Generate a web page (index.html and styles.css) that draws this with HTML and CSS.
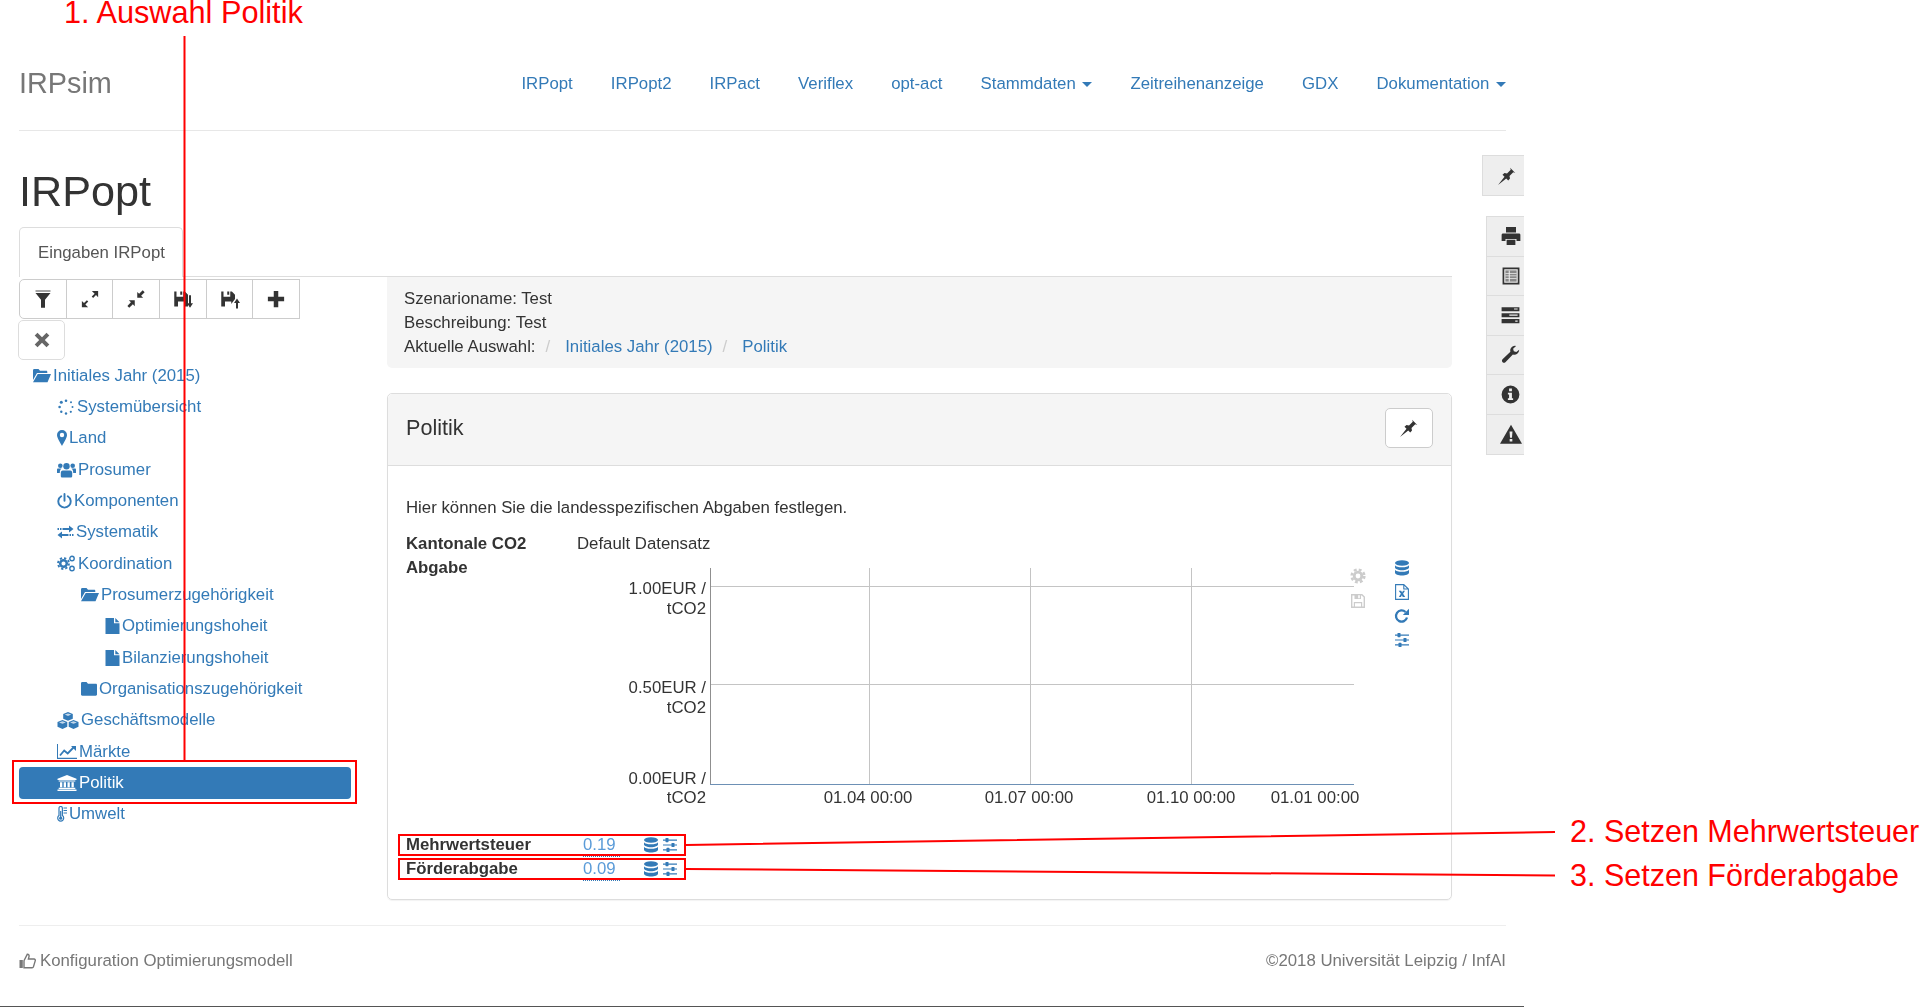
FILE: index.html
```html
<!DOCTYPE html>
<html lang="de">
<head>
  <meta charset="UTF-8" />
  <title>IRPsim</title>
  <link rel="stylesheet" href="styles.css">
</head>
<body>
  <svg class="sprite" xmlns="http://www.w3.org/2000/svg">
    <symbol id="i-pin" viewBox="0 0 16 16"><path d="M.8 15.200 6 8.600 4.400 7 6 5.600l2 .4 3-3-.5-1.600 4.100 4.100-1.600-.5-3 3 .4 2-1.400 1.600-1.600-1.600z"/></symbol>
    <symbol id="i-filter" viewBox="0 0 16 16"><path fill-opacity=".6" d="M2 1h12v1.200H2z"/><path d="M2 3.200h12L9.600 8.500v6.500H6.400V8.500z"/></symbol>
    <symbol id="i-full" viewBox="0 0 16 16"><path d="M9.500 1.500h5v5l-1.700-1.700-2.300 2.300-1.100-1.100 2.300-2.300zM6.500 14.500h-5v-5l1.700 1.700 2.300-2.300 1.100 1.100-2.300 2.300z"/></symbol>
    <symbol id="i-small" viewBox="0 0 16 16"><path d="M9 7V2.300l1.500 1.500 2.900-2.800 1.500 1.500-2.800 2.900L13.700 7zM7 9v4.700l-1.500-1.500-2.900 2.800-1.500-1.500 2.800-2.900L2.300 9z"/></symbol>
    <symbol id="i-savedown" viewBox="0 0 16 16"><path d="M1 2h1.800v4.200h5.400V2h1.300L12 4.500V14H9V10H4v4H1zM5.800 2h1.600v2.600H5.800z"/><path d="M12.800 5h1.600v6.300H16L13.600 15 11.200 11.300h1.600z"/></symbol>
    <symbol id="i-saveup" viewBox="0 0 16 16"><path d="M1 2h1.800v4.200h5.400V2h1.300L12 4.500V8L9 12V10H4v4H1zM5.800 2h1.600v2.600H5.800z"/><path d="M13.600 7.500 16 11.200h-1.600V15.500h-1.600v-4.300h-1.600z"/></symbol>
    <symbol id="i-plus" viewBox="0 0 16 16"><path d="M6.200 1.500h3.600v4.700h4.700v3.600H9.800v4.700H6.200V9.800H1.500V6.200h4.700z"/></symbol>
    <symbol id="i-x" viewBox="0 0 16 16"><path d="M4 1.500 8 5.500l4-4L14.500 4l-4 4 4 4-2.500 2.500-4-4-4 4L1.500 12l4-4-4-4z"/></symbol>
    <symbol id="i-open" viewBox="0 0 18 14"><path d="M0 1.500C0 .7.500 0 1.200 0h4.300L7 1.700h6.300c.6 0 1 .5 1 1V4H4L0 11zM4.700 5H18l-3.500 8.200H0z"/></symbol>
    <symbol id="i-folder" viewBox="0 0 16 14"><path d="M0 1.500C0 .7.500 0 1.200 0h4.300L7 1.700h7.800c.7 0 1.200.5 1.200 1.200v9.600c0 .7-.5 1.200-1.200 1.200H1.200C.5 13.700 0 13.200 0 12.500z"/></symbol>
    <symbol id="i-file" viewBox="0 0 14 16"><path d="M0 0h8.500v5.200H14V16H0zM9.800 0 14 4.200H9.800z"/></symbol>
    <symbol id="i-spin" viewBox="0 0 16 16"><g><circle cx="8" cy="1.800" r="1.300"/><circle cx="13" cy="3.300" r="1"/><circle cx="14.500" cy="8" r="1"/><circle cx="12.800" cy="12.800" r="1.100"/><circle cx="8" cy="14.500" r="1.200"/><circle cx="3.300" cy="12.800" r="1.200"/><circle cx="1.600" cy="8" r="1.300"/><circle cx="3.300" cy="3.300" r="1.500"/></g></symbol>
    <symbol id="i-marker" viewBox="0 0 10 16"><path fill-rule="evenodd" d="M5 0a5 5 0 0 1 5 5c0 3-3.500 8-5 11C3.500 13 0 8 0 5a5 5 0 0 1 5-5zm0 2.800a2.200 2.200 0 1 0 0 4.400 2.200 2.200 0 0 0 0-4.400z"/></symbol>
    <symbol id="i-users" viewBox="0 0 19 16"><circle cx="9.500" cy="4.200" r="3.200"/><circle cx="3.300" cy="3.700" r="2.300"/><circle cx="15.700" cy="3.700" r="2.300"/><path d="M5.800 8.500h7.400c1.300 0 2 1 2 2.200V14c0 1-.7 1.600-1.600 1.600H5.400c-.9 0-1.600-.6-1.600-1.600v-3.300c0-1.200.7-2.200 2-2.200zM.8 6.600h3.800c-1.300 1-1.800 2.100-1.800 4.400H0V8c0-.8.300-1.400.8-1.400zM14.400 6.600h3.800c.5 0 .8.600.8 1.400v3h-2.800c0-2.300-.5-3.400-1.800-4.400z"/></symbol>
    <symbol id="i-power" viewBox="0 0 15 16"><path fill="none" stroke="currentColor" stroke-width="1.900" stroke-linecap="round" d="M4.200 3.200a6.200 6.200 0 1 0 6.600 0M7.500 1v6.800"/></symbol>
    <symbol id="i-exch" viewBox="0 0 16 14"><path d="M0 3h1.500v2H0zM2.500 3h1.500v2H2.500zM5 3h6.500V.5L16 4l-4.500 3.500V5H5zM16 9h-1.500v2H16zM13.500 9H12v2h1.500zM11 9H4.500V6.500L0 10l4.500 3.500V11H11z"/></symbol>
    <symbol id="i-cogs" viewBox="0 0 19 17">
      <g fill="none" stroke="currentColor"><circle cx="6.500" cy="8.500" r="3.300" stroke-width="2.500"/><circle cx="6.500" cy="8.500" r="5.500" stroke-width="1.800" stroke-dasharray="2.300 2"/><circle cx="15" cy="3.500" r="2.200" stroke-width="1.400"/><circle cx="15" cy="13.500" r="2.200" stroke-width="1.400"/></g>
    </symbol>
    <symbol id="i-cubes" viewBox="0 0 21 17"><path d="M10.500 0l4.800 2v4.700l-4.800 2-4.800-2V2zM5 8l4.800 2v4.800L5 17 0 14.800V10zM16 8l5 2v4.800L16 17l-4.800-2.200V10z"/><path fill="#fff" fill-opacity=".7" d="M7.200 2.600l3.300 1.300 3.300-1.300-3.300-1.200zM1.500 10.500 5 11.800l3.300-1.300L5 9.200zM12.600 10.500 16 11.800l3.400-1.300L16 9.200z"/></symbol>
    <symbol id="i-chart" viewBox="0 0 20 15"><path d="M0 0h1v13.800h19V15H0z"/><path fill="none" stroke="currentColor" stroke-width="1.800" d="M3 11.500l4.200-5 3.500 3L16.500 3.500"/><path d="M14 2h5v5z"/></symbol>
    <symbol id="i-bank" viewBox="0 0 19 16"><path d="M9.500 0 19 3.700v1.300H0V3.700zM1.200 5.600h16.600v1H1.200zM2.500 7.200h2.300v5H2.500zM6.200 7.200h2.300v5H6.200zM10 7.200h2.300v5H10zM14 7.200h2.300v5H14zM1.200 12.800h16.600v1.300H1.200zM0 14.600h19V16H0z"/></symbol>
    <symbol id="i-thermo" viewBox="0 0 10 16"><path fill="none" stroke="currentColor" stroke-width="1.200" d="M2 9.600V2.200a1.700 1.700 0 0 1 3.400 0v7.400a3 3 0 1 1-3.400 0z"/><circle cx="3.700" cy="12.200" r="1.600"/><path d="M3.100 5h1.200v6H3.100zM6.500 1.500H10v1H6.500zM6.500 4H10v1H6.500zM6.500 6.500H10v1H6.500z"/></symbol>
    <symbol id="i-db" viewBox="0 0 16 16"><ellipse cx="8" cy="3" rx="7" ry="2.800"/><path d="M1 5.200c.8 1.300 3.600 2.100 7 2.100s6.200-.8 7-2.100v2.300c0 1.400-3.100 2.700-7 2.700S1 8.900 1 7.500zM1 9.700c.8 1.300 3.600 2.100 7 2.100s6.200-.8 7-2.100V12.800c0 1.500-3.100 2.700-7 2.700s-7-1.200-7-2.700z"/></symbol>
    <symbol id="i-sliders" viewBox="0 0 16 16"><path d="M1 2.500h14v1.200H1zM1 7.400h14v1.200H1zM1 12.300h14v1.200H1z"/><rect x="3.500" y="1" width="3" height="4.200" rx=".6"/><rect x="9.500" y="5.900" width="3" height="4.200" rx=".6"/><rect x="4.500" y="10.800" width="3" height="4.200" rx=".6"/></symbol>
    <symbol id="i-excel" viewBox="0 0 14 16"><path fill="none" stroke="currentColor" stroke-width="1.100" d="M.6.600h8.200L13.400 5v10.400H.6zM8.800.6V5h4.600"/><path d="M3.700 6.800h2.500l.9 1.700.9-1.700h2l-1.900 2.900 2.100 3.300H7.800L6.900 11.200 5.900 13H3.800L5.900 9.700z"/></symbol>
    <symbol id="i-refresh" viewBox="0 0 16 16"><path fill="none" stroke="currentColor" stroke-width="2.300" d="M13 9.500A5.600 5.600 0 1 1 11.500 4"/><path d="M15 .8V7H8.800z"/></symbol>
    <symbol id="i-cog" viewBox="0 0 16 16"><g fill="none" stroke="currentColor"><circle cx="8" cy="8" r="3.800" stroke-width="2.800"/><circle cx="8" cy="8" r="6.300" stroke-width="2.600" stroke-dasharray="2.800 2.150"/></g></symbol>
    <symbol id="i-save" viewBox="0 0 16 16"><path fill="none" stroke="currentColor" stroke-width="1.400" d="M1.700 1.700h10.200l2.400 2.400v10.200H1.700z"/><path d="M4.500 1.500h6.500v4.500H4.500zM3.800 9h8.400v5.500H3.800z"/><path fill="#fff" d="M8.200 2.300h1.600v2.900H8.200zM5 10.200h6v3.400H5z"/></symbol>
    <symbol id="i-print" viewBox="0 0 16 16"><path d="M4 .8h8v4.400H4zM1.600 6h12.800c.6 0 1.100.5 1.100 1.100V12h-3.100v-1.700H3.600V12H.5V7.100C.5 6.500 1 6 1.600 6zM4.500 11h7v4.200h-7z"/></symbol>
    <symbol id="i-list" viewBox="0 0 16 16"><path fill-rule="evenodd" d="M.5.500h15v15H.5zM2 2v12h12V2z"/><path fill-opacity=".55" d="M3 3h10v10H3z"/><path fill="#eee" d="M6 3h.9v10H6zM3 5.300h10v.7H3zM3 7.600h10v.7H3zM3 9.900h10v.7H3z"/></symbol>
    <symbol id="i-tasks" viewBox="0 0 16 16"><path d="M.5 1h15v3.500H.5zM.5 6h15v3.500H.5zM.5 11h15v3.500H.5z"/><path fill="#eee" d="M11 2h3v1h-3zM7 7.200h7v1H7zM12 12.200h2v1h-2z"/></symbol>
    <symbol id="i-wrench" viewBox="0 0 16 16"><path d="M15.300 4a4 4 0 0 1-5.300 3.900L3.700 14.500a1.700 1.700 0 0 1-2.400-2.400L7.900 5.700A4 4 0 0 1 12.700.8L10.200 3.200l.6 2.100 2.100.6z"/></symbol>
    <symbol id="i-info" viewBox="0 0 16 16"><path fill-rule="evenodd" d="M8 .5a7.500 7.500 0 1 0 0 15A7.500 7.500 0 0 0 8 .5zM6.800 3h2.400v2.200H6.800zM5.800 6.500h3.400v4.700h1v1.500H5.800v-1.500h1V8h-1z"/></symbol>
    <symbol id="i-warn" viewBox="0 0 18 16"><path fill-rule="evenodd" d="M9 .5l9 15.500H0zM7.800 6h2.400l-.4 5H8.200zM7.900 12h2.200v2.200H7.900z"/></symbol>
    <symbol id="i-thumb" viewBox="0 0 17 16"><path d="M.5 7h3.300v8H.5z"/><path fill="none" stroke="currentColor" stroke-width="1.400" d="M5 7.700 8.300 1.200c1.500 0 2 1.200 1.700 2.400L9.400 6H15c1.100 0 1.500 1 1.200 1.900l-1.700 5.700c-.2.700-.7 1.100-1.400 1.100H5z"/></symbol>
  </svg>

  <div class="page">
    <nav class="topnav">
      <span class="brand">IRPsim</span>
      <ul class="navlinks">
        <li><a>IRPopt</a></li>
        <li><a>IRPopt2</a></li>
        <li><a>IRPact</a></li>
        <li><a>Veriflex</a></li>
        <li><a>opt-act</a></li>
        <li><a>Stammdaten <span class="caret"></span></a></li>
        <li><a>Zeitreihenanzeige</a></li>
        <li><a>GDX</a></li>
        <li><a>Dokumentation <span class="caret"></span></a></li>
      </ul>
    </nav>

    <h1>IRPopt</h1>

    <div class="tabs">
      <div class="tab">Eingaben IRPopt</div>
    </div>

    <div class="main">
      <aside class="side">
        <div class="toolbar">
          <button class="tbtn"><svg width="20" height="20"><use href="#i-filter"/></svg></button>
          <button class="tbtn"><svg width="20" height="20"><use href="#i-full"/></svg></button>
          <button class="tbtn"><svg width="20" height="20"><use href="#i-small"/></svg></button>
          <button class="tbtn"><svg width="20" height="20"><use href="#i-savedown"/></svg></button>
          <button class="tbtn"><svg width="20" height="20"><use href="#i-saveup"/></svg></button>
          <button class="tbtn"><svg width="20" height="20"><use href="#i-plus"/></svg></button>
        </div>
        <button class="tbtn single"><svg width="18" height="18"><use href="#i-x"/></svg></button>

        <ul class="tree">
          <li class="lvl0"><svg width="18" height="14"><use href="#i-open"/></svg>Initiales Jahr (2015)</li>
          <li class="lvl1"><svg width="18" height="16"><use href="#i-spin"/></svg>Systemübersicht</li>
          <li class="lvl1"><svg width="10" height="16"><use href="#i-marker"/></svg>Land</li>
          <li class="lvl1"><svg width="19" height="16"><use href="#i-users"/></svg>Prosumer</li>
          <li class="lvl1"><svg width="15" height="16"><use href="#i-power"/></svg>Komponenten</li>
          <li class="lvl1"><svg width="17" height="14"><use href="#i-exch"/></svg>Systematik</li>
          <li class="lvl1"><svg width="19" height="17"><use href="#i-cogs"/></svg>Koordination</li>
          <li class="lvl2"><svg width="18" height="14"><use href="#i-open"/></svg>Prosumerzugehörigkeit</li>
          <li class="lvl3"><svg width="15" height="16"><use href="#i-file"/></svg>Optimierungshoheit</li>
          <li class="lvl3"><svg width="15" height="16"><use href="#i-file"/></svg>Bilanzierungshoheit</li>
          <li class="lvl2"><svg width="16" height="14"><use href="#i-folder"/></svg>Organisationszugehörigkeit</li>
          <li class="lvl1"><svg width="22" height="17"><use href="#i-cubes"/></svg>Geschäftsmodelle</li>
          <li class="lvl1"><svg width="20" height="15"><use href="#i-chart"/></svg>Märkte</li>
          <li class="lvl1 active"><svg width="20" height="16"><use href="#i-bank"/></svg>Politik</li>
          <li class="lvl1"><svg width="10" height="16"><use href="#i-thermo"/></svg>Umwelt</li>
        </ul>
      </aside>

      <section class="content">
        <div class="well">
          <div>Szenarioname: Test</div>
          <div>Beschreibung: Test</div>
          <div class="crumbs">Aktuelle Auswahl:<span class="sep">/</span><a>Initiales Jahr (2015)</a><span class="sep">/</span><a>Politik</a></div>
        </div>

        <div class="panel">
          <div class="panel-head">
            <span class="panel-title">Politik</span>
            <button class="pinbtn"><svg width="20" height="20"><use href="#i-pin"/></svg></button>
          </div>
          <div class="panel-body">
            <p class="intro">Hier können Sie die landesspezifischen Abgaben festlegen.</p>
            <div class="param">
              <div class="param-label">Kantonale CO2 Abgabe</div>
              <div>
                <div class="param-name">Default Datensatz</div>
              </div>
            </div>
            <svg class="chart" width="856" height="258">
              <g class="grid">
                <path d="M292.500 12V228M453.500 12V228M614.500 12V228M133 30.500H777M133 128.500H777"/>
              </g>
              <path class="axis" d="M133.500 12V228"/>
              <path class="base" d="M133 228.500H777"/>
              <text class="ylab" x="129" y="38">1.00EUR /</text>
              <text class="ylab" x="129" y="58">tCO2</text>
              <text class="ylab" x="129" y="137">0.50EUR /</text>
              <text class="ylab" x="129" y="157">tCO2</text>
              <text class="ylab" x="129" y="228">0.00EUR /</text>
              <text class="ylab" x="129" y="247">tCO2</text>
              <text class="xlab" x="291" y="247">01.04 00:00</text>
              <text class="xlab" x="452" y="247">01.07 00:00</text>
              <text class="xlab" x="614" y="247">01.10 00:00</text>
              <text class="xlab" x="738" y="247">01.01 00:00</text>
              <use class="ic-off" href="#i-cog" x="773" y="12" width="16" height="16"/>
              <use class="ic-off" href="#i-save" x="773" y="37" width="16" height="16"/>
              <use class="ic-on" href="#i-db" x="817" y="4" width="16" height="16"/>
              <use class="ic-on" href="#i-excel" x="818" y="28" width="14" height="16"/>
              <use class="ic-on" href="#i-refresh" x="817" y="52" width="16" height="16"/>
              <use class="ic-on" href="#i-sliders" x="817" y="76" width="16" height="16"/>
            </svg>
            <div class="setrow">
              <b>Mehrwertsteuer</b><span class="val"><a>0.19</a></span>
              <span class="rowicons"><svg width="16" height="16"><use href="#i-db"/></svg><svg width="16" height="16"><use href="#i-sliders"/></svg></span>
            </div>
            <div class="setrow">
              <b>Förderabgabe</b><span class="val"><a>0.09</a></span>
              <span class="rowicons"><svg width="16" height="16"><use href="#i-db"/></svg><svg width="16" height="16"><use href="#i-sliders"/></svg></span>
            </div>
          </div>
        </div>
      </section>
    </div>

    <footer class="foot">
      <span class="foot-left"><svg width="17" height="16"><use href="#i-thumb"/></svg>Konfiguration Optimierungsmodell</span>
      <span>©2018 Universität Leipzig / InfAI</span>
    </footer>

    <!-- side dock sits over the page edge -->
    <div class="dock">
      <div class="dock-pin"><svg width="20" height="20"><use href="#i-pin"/></svg></div>
      <ul class="dock-list">
        <li><svg width="20" height="20"><use href="#i-print"/></svg></li>
        <li><svg width="18" height="18"><use href="#i-list"/></svg></li>
        <li><svg width="19" height="19"><use href="#i-tasks"/></svg></li>
        <li><svg width="19" height="19"><use href="#i-wrench"/></svg></li>
        <li><svg width="19" height="19"><use href="#i-info"/></svg></li>
        <li><svg width="22" height="20"><use href="#i-warn"/></svg></li>
      </ul>
    </div>
  </div>

  <!-- red annotations drawn on top of the screenshot -->
  <svg class="notes" width="1920" height="1008">
    <path d="M184.500 36V760"/>
    <rect x="13" y="761" width="343" height="42"/>
    <rect x="399" y="835" width="286" height="20"/>
    <rect x="399" y="859" width="286" height="20"/>
    <path d="M686 845L1555 832M686 869L1555 875.500"/>
    <text class="note-first" x="64" y="23">1. Auswahl Politik</text>
    <text x="1570" y="842">2. Setzen Mehrwertsteuer</text>
    <text x="1570" y="886">3. Setzen Förderabgabe</text>
  </svg>
</body>
</html>
```
FILE: styles.css
```css
* {
  box-sizing: border-box;
}

body {
  margin: 0;
  background: #fff;
  color: #333;
  font-family: "Liberation Sans", Arial, sans-serif;
  font-size: 16.8px;
  line-height: 24px;
}

ul {
  list-style: none;
  margin: 0;
  padding: 0;
}

a {
  color: #337ab7;
}

.sprite {
  position: absolute;
  width: 0;
  height: 0;
}

svg {
  fill: currentColor;
}

.page {
  position: relative;
  width: 1524px;
  height: 1007px;
  padding: 0 18px 0 19px;
  border-bottom: 1px solid #555;
  filter: blur(0.55px);
}

/* top navigation */
.topnav {
  display: flex;
  justify-content: space-between;
  align-items: center;
  height: 131px;
  padding-top: 37px;
  border-bottom: 1px solid #e7e7e7;
}

.brand {
  margin-top: -1px;
  font-size: 28.8px;
  color: #777;
}

.navlinks {
  display: flex;
  gap: 38.1px;
}

.caret {
  display: inline-block;
  width: 0;
  height: 0;
  margin-left: 2px;
  vertical-align: middle;
  border-top: 5px solid #337ab7;
  border-left: 5px solid transparent;
  border-right: 5px solid transparent;
}

h1 {
  margin: 36px 0 12px;
  font-size: 43.2px;
  font-weight: 400;
  line-height: 48px;
}

.tabs {
  width: 1433px;
  height: 50px;
  border-bottom: 1px solid #ddd;
}

.tab {
  width: 164px;
  height: 50px;
  padding: 13px 18px;
  border: 1px solid #ddd;
  border-bottom: 0;
  border-radius: 5px 5px 0 0;
  background: #fff;
  color: #555;
  white-space: nowrap;
}

.main {
  display: grid;
  grid-template-columns: 368px 1065px;
}

/* left tree */
.toolbar {
  display: flex;
  margin-top: 2px;
}

.tbtn {
  display: flex;
  align-items: center;
  justify-content: center;
  width: 47.7px;
  height: 40px;
  margin: 0 0 0 -1px;
  padding: 0;
  border: 1px solid #ccc;
  background: #fff;
  color: #333;
}

.toolbar .tbtn:first-child {
  margin-left: 0;
  border-radius: 5px 0 0 5px;
}

.single {
  width: 47px;
  margin: 1px 0 0 -1px;
  border-color: #ddd;
  border-radius: 5px;
  color: #666;
}

.tree {
  width: 332px;
}

.tree li {
  display: flex;
  align-items: center;
  height: 31.35px;
  border-radius: 4px;
  color: #337ab7;
}

.tree svg {
  flex: none;
  margin-right: 2px;
}

.lvl0 { padding-left: 14px; }
.lvl1 { padding-left: 38px; }
.lvl2 { padding-left: 62px; }
.lvl3 { padding-left: 86px; }

.tree .active {
  background: #337ab7;
  color: #fff;
}

/* right content */
.well {
  height: 91px;
  margin-bottom: 25px;
  padding: 10px 17px;
  border-radius: 0 0 5px 5px;
  background: #f5f5f5;
}

.sep {
  margin: 0 15px 0 10px;
  color: #ccc;
}

.panel {
  height: 507px;
  border: 1px solid #ddd;
  border-radius: 5px;
  box-shadow: 0 1px 1px rgba(0, 0, 0, 0.05);
}

.panel-head {
  display: flex;
  justify-content: space-between;
  align-items: center;
  height: 72px;
  padding: 0 18px 4px;
  border-bottom: 1px solid #ddd;
  border-radius: 5px 5px 0 0;
  background: #f5f5f5;
}

.panel-title {
  font-size: 21.6px;
}

.pinbtn {
  display: flex;
  align-items: center;
  justify-content: center;
  width: 48px;
  height: 40px;
  padding: 0;
  border: 1px solid #ccc;
  border-radius: 5px;
  background: #fff;
  color: #333;
}

.panel-body {
  padding: 30px 18px 0;
}

.intro {
  margin: 0 0 12px;
}

.param {
  display: flex;
  height: 24px;
}

.param-label {
  width: 171px;
  height: 48px;
  padding-right: 40px;
  font-weight: 700;
}

.chart {
  display: block;
  margin-left: 171px;
}

.grid {
  fill: none;
  stroke: #c4c4c4;
  stroke-width: 1;
}

.axis {
  fill: none;
  stroke: #8f8f8f;
}

.base {
  fill: none;
  stroke: #6d90b5;
}

.ylab,
.xlab {
  fill: #333;
  font-size: 16.8px;
}

.ylab {
  text-anchor: end;
}

.xlab {
  text-anchor: middle;
}

.ic-off {
  color: #ccc;
}

.ic-on {
  color: #337ab7;
}

.setrow {
  display: flex;
  align-items: center;
  height: 24px;
}

.setrow b {
  width: 177px;
}

.val {
  width: 60px;
}

.val a {
  display: inline-block;
  width: 37px;
  line-height: 22px;
  border-bottom: 1px dotted #337ab7;
  color: #5a9bd8;
}

.rowicons {
  display: flex;
  gap: 3px;
  color: #337ab7;
}

.chart + .setrow {
  margin-top: 19px;
}

/* footer */
.foot {
  display: flex;
  justify-content: space-between;
  align-items: center;
  height: 70px;
  margin-top: 25px;
  border-top: 1px solid #eee;
  color: #777;
}

.foot-left {
  display: flex;
  align-items: center;
  gap: 4px;
}

/* side dock */
.dock {
  position: absolute;
  top: 155px;
  right: 0;
  display: flex;
  flex-direction: column;
  align-items: flex-end;
  color: #333;
}

.dock-pin {
  display: flex;
  align-items: center;
  justify-content: center;
  width: 42px;
  height: 41px;
  padding-left: 6px;
  border: 1px solid #ddd;
  border-right: 0;
  background: #eee;
}

.dock-list {
  width: 38px;
  margin-top: 20px;
  border: 1px solid #ddd;
  border-right: 0;
  background: #eee;
}

.dock-list li {
  display: flex;
  align-items: center;
  justify-content: center;
  height: 39.5px;
  padding-left: 10px;
  border-bottom: 1px solid #ddd;
}

.dock-list li:last-child {
  border-bottom: 0;
}

/* annotations */
.notes {
  position: absolute;
  top: 0;
  left: 0;
}

.notes path,
.notes rect {
  fill: none;
  stroke: #f00;
  stroke-width: 2;
}

.notes text {
  fill: #f00;
  font-size: 30.5px;
}

.notes .note-first {
  font-size: 30.7px;
}
```
